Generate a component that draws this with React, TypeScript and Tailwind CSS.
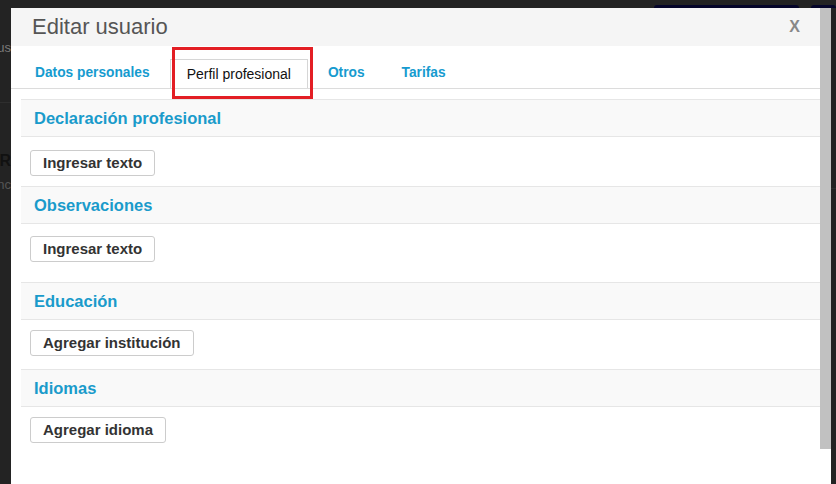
const sections = [
  { title: "Declaración profesional", action: "Ingresar texto", top: "mt-[10px]", gap: "mt-[13px]" },
  { title: "Observaciones", action: "Ingresar texto", top: "mt-[10px]", gap: "mt-[12px]" },
  { title: "Educación", action: "Agregar institución", top: "mt-[20px]", gap: "mt-[10px]" },
  { title: "Idiomas", action: "Agregar idioma", top: "mt-[13px]", gap: "mt-[10px]" },
];

const tabs = ["Datos personales", "Perfil profesional", "Otros", "Tarifas"];

export default function App() {
  const active = "Perfil profesional";

  return (
    <div
      className="h-[484px] w-[836px] overflow-hidden bg-[#232323] text-[#333]"
      style={{ fontFamily: '"Liberation Sans", Arial, sans-serif' }}
    >
      {/* page behind the modal, top edge */}
      <div className="flex h-[8px]">
        <div className="w-[654px]" />
        <div className="mt-[5px] h-[3px] w-[145px] rounded-t-[3px] bg-[#05052a]" />
        <div className="w-[12px]" />
        <div className="mt-[5px] h-[3px] flex-1 rounded-t-[3px] bg-[#05052a]" />
      </div>

      <div className="flex h-[476px]">
        {/* sliver of underlying page on the left */}
        <div className="flex w-[11px] flex-col items-end overflow-hidden text-[13px]">
          <div className="mt-[30px] whitespace-nowrap text-[#7a7a7a]">us</div>
          <div className="mt-[44px] h-px w-full bg-[#2e2e2e]" />
          <div className="mt-[46px] whitespace-nowrap text-[16px] font-bold text-[#111]">PR</div>
          <div className="mt-[2px] whitespace-nowrap text-[#555]">nc</div>
        </div>

        <div className="relative flex w-[820px] bg-white">
          <div className="w-[809px]">
            <div className="flex h-[38px] items-center justify-between bg-[#f5f5f5] pl-[21px] pr-[20px]">
              <h1 className="text-[22px] leading-none text-[#555]">Editar usuario</h1>
              <button className="text-[16px] font-bold text-[#888]">X</button>
            </div>

            <div className="flex h-[43px] items-end gap-[3px] border-b border-[#dcdcdc] pl-[7px]">
              {tabs.map((t) =>
                t === active ? (
                  <div
                    key={t}
                    className="flex h-[29px] items-center border border-b-0 border-[#d6d6d6] bg-white px-[16px] pt-[1px] text-[14px] text-[#111]"
                  >
                    {t}
                  </div>
                ) : (
                  <div
                    key={t}
                    className="flex h-[29px] items-center px-[17px] text-[13.75px] font-bold text-[#169bcf]"
                  >
                    {t}
                  </div>
                ),
              )}
            </div>

            <div className="pl-[10px]">
              {sections.map((s) => (
                <section key={s.title} className={s.top}>
                  <div className="flex h-[38px] items-center border-y border-[#e6e6e6] bg-[#f9f9f9] pl-[13px]">
                    <h2 className="text-[16.5px] font-bold text-[#1a9bcb]">{s.title}</h2>
                  </div>
                  <button
                    className={`${s.gap} ml-[9px] flex h-[26px] items-center rounded-[3px] border border-[#cccccc] bg-white px-[12px] text-[15px] font-bold text-[#333]`}
                  >
                    {s.action}
                  </button>
                </section>
              ))}
            </div>
          </div>

          {/* scrollbar */}
          <div className="w-[11px]">
            <div className="h-[441px] bg-[#c1c1c1]" />
          </div>

          {/* red highlight annotation */}
          <div className="pointer-events-none absolute left-[161px] top-[39px] h-[52px] w-[141px] border-[3px] border-[#e31e24]" />
        </div>

        <div className="flex-1 overflow-hidden">
          <div className="mt-[180px] h-px bg-[#2e2e2e]" />
        </div>
      </div>
    </div>
  );
}
